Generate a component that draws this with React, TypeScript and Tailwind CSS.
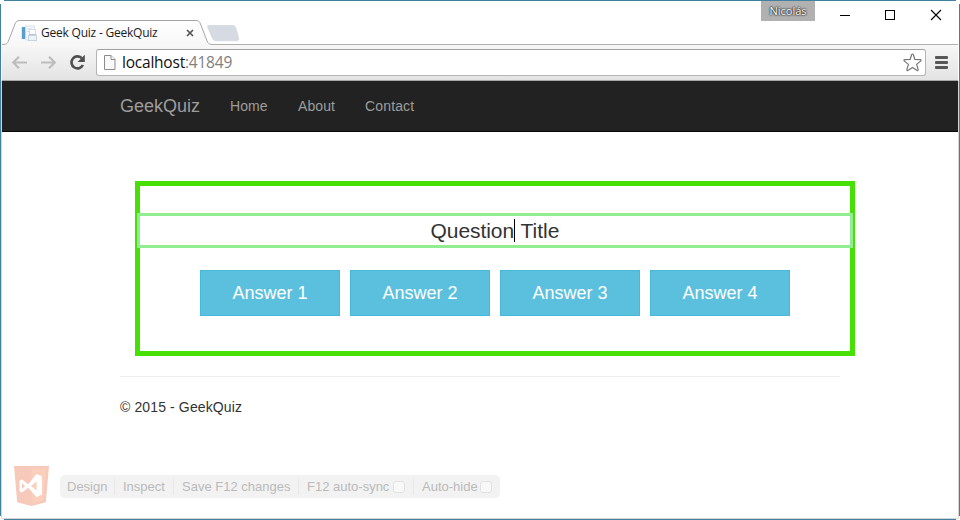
import React from "react";

const ARIAL = "font-['Liberation_Sans',Arial,sans-serif]";
const SEGOE = "font-['Open_Sans','Noto_Sans',sans-serif]";

function TabStrip() {
  return (
    <div className="relative flex h-[44px] items-start justify-between">
      <svg className="absolute left-0 top-0" width="956" height="44" viewBox="2 1 956 44" fill="none">
        <defs>
          <linearGradient id="tab" x1="0" y1="20" x2="0" y2="45" gradientUnits="userSpaceOnUse">
            <stop offset="0" stopColor="#ffffff" />
            <stop offset="1" stopColor="#f7f7f7" />
          </linearGradient>
        </defs>
        <path d="M211.5 44.5H958" stroke="#b0b0b0" />
        <path
          d="M2 44.2H4C6.5 44.2 7.4 43.4 8.3 41.2L15 24C16 21.5 17.2 20.5 19.5 20.5H196C198.4 20.5 199.5 21.4 200.5 24L207.2 41.2C208.1 43.5 209.3 44.4 212 44.4V45H2Z"
          fill="url(#tab)"
        />
        <path
          d="M2 44.3H4C6.5 44.3 7.4 43.4 8.3 41.2L15 24C16 21.5 17.2 20.5 19.5 20.5H196C198.4 20.5 199.5 21.4 200.5 24L207.2 41.2C208.1 43.5 209.3 44.4 212 44.4"
          stroke="#a6a6a6"
        />
        <path
          d="M209 25.5H232C234 25.5 235 26.2 235.8 28L238.6 37.5C239 39.6 238.5 40.8 236.5 40.8H217C214.5 40.8 213.3 40.2 212.5 38.2L207.8 27.5C207.3 26.2 207.7 25.5 209 25.5Z"
          fill="#d6dbe3"
          stroke="#ccd0d6"
          strokeWidth="0.6"
        />
      </svg>
      <div className="relative flex h-[44px] items-center pl-[19px] pt-[21px]">
        <svg width="17" height="17" viewBox="0 0 17 17" className="-mt-px">
          <rect x="4.5" y="1" width="9" height="14" fill="#f4f7fb" stroke="#dbe3ec" />
          <rect x="0.8" y="2" width="3.4" height="12" fill="#5c9ecb" />
          <path d="M6 4h5M6 6.5h4" stroke="#d3deea" />
          <rect x="8.5" y="4.5" width="6" height="5" fill="#fbfcfe" stroke="#d3dde8" />
          <rect x="7.5" y="10.5" width="8" height="5" fill="#edf2f8" stroke="#c6d3e1" />
          <path d="M8 9.5h7" stroke="#b8c4d1" />
        </svg>
        <span className={`${SEGOE} ml-[3px] -mt-[2px] w-[142px] whitespace-nowrap text-[12px] leading-[18px] tracking-[-0.22px] text-[#1c1c1c]`}>
          Geek Quiz - GeekQuiz
        </span>
        <svg width="10" height="10" viewBox="0 0 10 10" className="-mt-[2px] ml-[2px]">
          <path d="M2 2l6 6M8 2l-6 6" stroke="#555" strokeWidth="1.7" />
        </svg>
      </div>
      <div className="relative flex items-start">
        <div className={`${SEGOE} h-5 w-[54px] bg-[#b1b1b1] text-center text-[11px] leading-[20px] text-white [text-shadow:0_0_2px_#222,0_0_2px_#333,0_0_1px_#333]`}>
          Nicolás
        </div>
        <svg width="143" height="28" viewBox="815 1 143 28" fill="none" stroke="#000" shapeRendering="crispEdges">
          <path d="M840 15.5h10" />
          <rect x="885.5" y="10.5" width="9" height="9" />
          <path d="M931 10l10 10M941 10l-10 10" shapeRendering="auto" strokeWidth="1.1" />
        </svg>
      </div>
    </div>
  );
}

function Toolbar() {
  return (
    <div className="flex h-[36px] items-center border-b border-[#a6a6a6] bg-linear-to-b from-[#f7f7f7] to-[#e3e3e3] pl-[9px]">
      <svg width="84" height="30" viewBox="11 47 84 30" fill="none" className="-mt-px shrink-0">
        <g stroke="#bdbdbd" strokeWidth="2.2">
          <path d="M13.5 62.5H27M19 56.7l-5.8 5.8 5.8 5.8" />
          <path d="M41 62.5H54.5M49 56.7l5.8 5.8-5.8 5.8" />
        </g>
        <path d="M82.9 65A6 6 0 1 1 81.6 58" stroke="#4f4f4f" strokeWidth="2.6" />
        <path d="M84.8 54.8v7.2h-7.2z" fill="#4f4f4f" />
      </svg>
      <div className="ml-[1px] flex h-[27px] w-[830px] items-center rounded-[3px] border border-[#b5b5b5] border-t-[#a0a0a0] bg-white pl-[6px]">
        <svg width="14" height="17" viewBox="0 0 14 17" fill="#fafafa" stroke="#8c8c8c">
          <path d="M1.5 1.5h6.5l4 4v10h-10.5z" />
          <path d="M8 1.5v4h4" />
        </svg>
        <span className={`${SEGOE} -mt-px ml-[5px] flex-1 text-[15.5px] leading-[22px] tracking-[-0.22px] text-[#111]`}>
          localhost<span className="text-[#808080]">:41849</span>
        </span>
        <svg width="21" height="21" viewBox="0 0 21 21" fill="none" stroke="#757575" strokeWidth="1.2" strokeLinejoin="round" className="mr-[2px]">
          <path d="M10.5 2c.5 0 .7.3.9.8l1.5 4.7 5.2.1c1.1.1 1.3.9.5 1.5l-4 3.3 1.5 5c.3 1-.5 1.5-1.3.9l-4.3-2.8-4.3 2.8c-.8.6-1.6.1-1.3-.9l1.5-5-4-3.3c-.8-.6-.6-1.4.5-1.5l5.2-.1 1.5-4.7c.2-.5.4-.8.9-.8z" />
        </svg>
      </div>
      <div className="-mt-px ml-[9px] flex w-[13px] flex-col gap-[2px]">
        <div className="h-[3px] rounded-[1px] bg-[#575757]" />
        <div className="h-[3px] rounded-[1px] bg-[#575757]" />
        <div className="h-[3px] rounded-[1px] bg-[#575757]" />
      </div>
    </div>
  );
}

function Navbar() {
  return (
    <nav className="flex h-[51px] items-center border-b border-[#080808] bg-[#222] pl-[118px] text-[14px] text-[#9d9d9d]">
      <span className="w-[110px] text-[18px] leading-5">GeekQuiz</span>
      <span className="w-[68px] leading-5 tracking-[0.1px]">Home</span>
      <span className="w-[67px] leading-5 tracking-[0.1px]">About</span>
      <span className="leading-5 tracking-[0.15px]">Contact</span>
    </nav>
  );
}

function Question() {
  return (
    <section className="ml-[133px] mt-[49px] h-[175px] w-[720px] border-[5px] border-[#47e005] pt-[27px]">
      <div className="-mx-[3px] flex h-[35px] items-center justify-center border-[3px] border-[#90ee90] text-[21px] leading-6 text-[#333]">
        <span className="tracking-[-0.08px]">Question</span>
        <span className="-mr-px h-[23px] w-px bg-black" />
        <span className="whitespace-pre pl-px"> Title</span>
      </div>
      <div className="mt-[22px] flex justify-center gap-[10px]">
        {[1, 2, 3, 4].map((n) => (
          <button key={n} className="h-[46px] w-[140px] border border-[#46b8da] bg-[#5bc0de] text-[18px] leading-6 text-white">
            Answer {n}
          </button>
        ))}
      </div>
    </section>
  );
}

function Separator() {
  return <span className="h-4 w-px bg-[#e7e7e7]" />;
}

function Check() {
  return <span className="h-3 w-3 rounded-[3px] border border-[#e2e2e2] bg-[#f8f8f8]" />;
}

function BrowserLink() {
  return (
    <div className="ml-[12px] mt-[49px] flex items-center">
      <svg width="35" height="40" viewBox="0 0 35 40">
        <path d="M0 0h35l-3.2 36.2L17.5 40 3.2 36.2z" fill="#f7c9ba" />
        <path d="M17.5 3H32l-2.7 31-11.8 3.3z" fill="#fad0bd" />
        <path
          d="M5.5 14.8L8 13.5l6.2 4.7L22.500 8l5.5 2.3v18.500L22.500 31l-8.300-9.200L8 26.500l-2.500-1.300zM8 16.900v6.200l3-3.100zM17 20l5.600 4.600v-9.200z"
          fill="#fff"
          fillRule="evenodd"
        />
      </svg>
      <div className="ml-[11px] mt-[1px] flex h-[23px] w-[440px] items-center whitespace-nowrap rounded-[5px] bg-[#f2f2f2] pl-[7px] text-[13px] leading-5 text-[#bababa]">
        <span className="w-[47px]">Design</span>
        <Separator />
        <span className="ml-[8px] w-[50px]">Inspect</span>
        <Separator />
        <span className="ml-[8px] w-[116px]">Save F12 changes</span>
        <Separator />
        <span className="ml-[8px] w-[86px]">F12 auto-sync</span>
        <Check />
        <span className="ml-[8px] h-4 w-px bg-[#e7e7e7]" />
        <span className="ml-[8px] w-[58px]">Auto-hide</span>
        <Check />
      </div>
    </div>
  );
}

export default function App() {
  return (
    <div className={`${ARIAL} relative h-[520px] w-[960px] overflow-hidden bg-white px-[2px] pt-px`}>
      <div className="absolute left-[4px] top-0 h-px w-[952px] bg-[#3f819e]" />
      <div className="absolute left-0 top-[4px] h-[512px] w-px bg-[#3f819e]" />
      <div className="absolute left-[959px] top-[4px] h-[512px] w-px bg-[#3f819e]" />
      <div className="absolute left-[4px] top-[519px] h-px w-[952px] bg-[#3f819e]" />
      <div className="absolute left-px top-[81px] h-[438px] w-[958px] rounded-b-[2px] border border-t-0 border-[#d5d5d5]" />
      <TabStrip />
      <Toolbar />
      <Navbar />
      <Question />
      <hr className="ml-[118px] mt-[20px] w-[720px] border-[#eee]" />
      <footer className="ml-[118px] mt-[20px] text-[14px] leading-5 tracking-[0.12px] text-[#333]">© 2015 - GeekQuiz</footer>
      <BrowserLink />
    </div>
  );
}
